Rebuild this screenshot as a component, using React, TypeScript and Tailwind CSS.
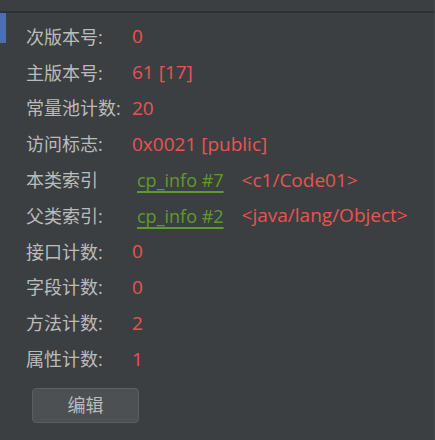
const rows: { label: string; value?: string; link?: string; ref?: string }[] = [
  { label: '次版本号:', value: '0' },
  { label: '主版本号:', value: '61 [17]' },
  { label: '常量池计数:', value: '20' },
  { label: '访问标志:', value: '0x0021 [public]' },
  { label: '本类索引', link: 'cp_info #7', ref: '<c1/Code01>' },
  { label: '父类索引:', link: 'cp_info #2', ref: '<java/lang/Object>' },
  { label: '接口计数:', value: '0' },
  { label: '字段计数:', value: '0' },
  { label: '方法计数:', value: '2' },
  { label: '属性计数:', value: '1' },
]

export default function App() {
  return (
    <div
      className="w-[435px] h-[440px] bg-[#3c3f41] flex flex-col overflow-hidden border-r border-[#45484a]"
      style={{ fontFamily: '"Open Sans", "Noto Sans CJK SC", sans-serif' }}
    >
      <div className="h-[11px] shrink-0" />
      <div className="h-[2px] shrink-0 bg-[#2f3133]" />
      <div className="flex">
        {/* selected marker */}
        <div className="w-[6px] h-[30px] bg-[#4b6eaf] shrink-0" />
        <div className="flex flex-col pt-[6px] pl-[20px]">
          {rows.map((r) => (
            <div key={r.label} className="flex items-center h-[35.8px] leading-none">
              <span className="w-[106px] text-[18px] text-[#bbbbbb]">{r.label}</span>
              {r.value !== undefined ? (
                <span className="text-[19px] text-[#ea5350]">{r.value}</span>
              ) : (
                <>
                  <span className="ml-[5px] text-[18px] text-[#5f9a2e] underline underline-offset-[4px] decoration-[1.5px]">
                    {r.link}
                  </span>
                  <span className="ml-[18px] text-[19px] text-[#ea5350]">{r.ref}</span>
                </>
              )}
            </div>
          ))}
          <button className="mt-[11px] ml-[6px] w-[107px] h-[35px] rounded-[4px] bg-[#4c5052] border border-[#5a5e60] text-[#bbbbbb] text-[18px] leading-none">
            编辑
          </button>
        </div>
      </div>
    </div>
  )
}
